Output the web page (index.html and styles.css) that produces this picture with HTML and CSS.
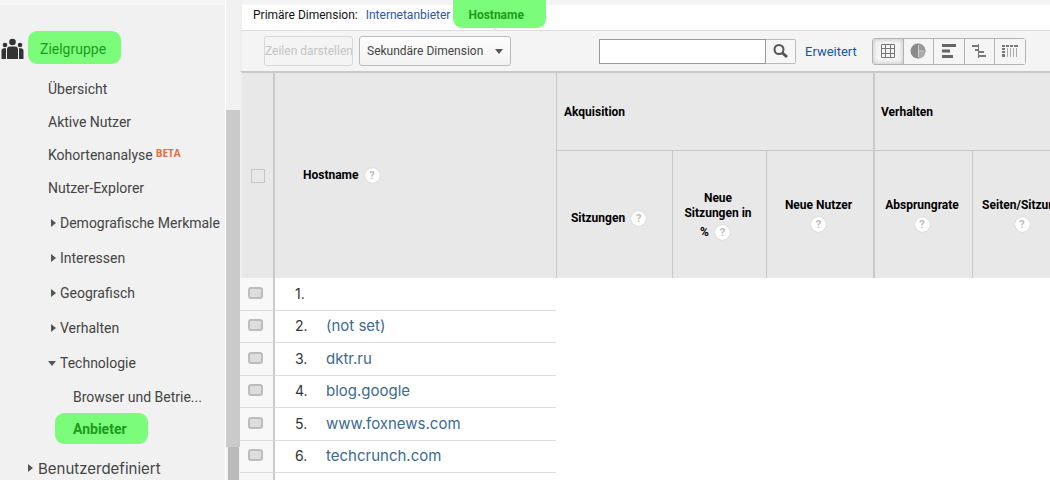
FILE: index.html
```html
<!DOCTYPE html>
<html lang="de">
<head>
<meta charset="utf-8">
<title>Zielgruppe – Anbieter</title>
<link rel="stylesheet" href="styles.css">
</head>
<body>
<div class="app">
  <nav class="sidebar" aria-label="Berichte">
    <div class="section">
      <svg class="people" width="23" height="22" viewBox="0 0 23 22" fill="#333" aria-hidden="true">
        <circle cx="11.500" cy="4" r="3.300"/><circle cx="4" cy="7" r="2.300"/><circle cx="19" cy="7" r="2.300"/>
        <path d="M6 21v-9.500q0-3 3-3h5q3 0 3 3v9.500zM.500 21v-8q0-2.700 2.700-2.700h1.800v10.700zM22.500 21v-8q0-2.700-2.700-2.700h-1.800v10.700z"/>
      </svg>
      <a class="pill section-pill" href="#">Zielgruppe</a>
    </div>
    <ul class="menu">
      <li><a href="#">Übersicht</a></li>
      <li><a href="#">Aktive Nutzer</a></li>
      <li class="short"><a href="#">Kohortenanalyse<span class="beta">BETA</span></a></li>
      <li class="tall"><a href="#">Nutzer-Explorer</a></li>
      <li class="tall"><a href="#"><i class="right"></i>Demografische Merkmale</a></li>
      <li class="tall"><a href="#"><i class="right"></i>Interessen</a></li>
      <li class="tall"><a href="#"><i class="right"></i>Geografisch</a></li>
      <li class="tall"><a href="#"><i class="right"></i>Verhalten</a></li>
      <li class="tall"><a href="#"><i class="down"></i>Technologie</a></li>
      <li class="short child"><a href="#">Browser und Betrie...</a></li>
      <li class="short"><a class="pill child-pill" href="#">Anbieter</a></li>
    </ul>
    <a class="custom" href="#"><i class="right"></i>Benutzerdefiniert</a>
  </nav>
  <div class="scroll" aria-hidden="true"><div class="track"></div><div class="thumb"></div><div class="thumb-end"></div></div>
  <main class="main">
    <div class="dimensions">
      <span>Primäre Dimension:</span>
      <a class="dim" href="#">Internetanbieter</a>
      <a class="pill dim-pill" href="#">Hostname</a>
    </div>
    <div class="toolbar">
      <button class="btn plot" disabled>Zeilen darstellen</button>
      <button class="btn secondary">Sekundäre Dimension<i class="down"></i></button>
      <form class="search">
        <input type="text" aria-label="Suche">
        <button type="button" aria-label="Suchen">
          <svg width="16" height="16" viewBox="0 0 16 16" fill="none" stroke="#555"><circle cx="6" cy="6.500" r="4.500" stroke-width="2"/><path d="M9.500 10l4.500 4" stroke-width="3"/></svg>
        </button>
      </form>
      <a class="advanced" href="#">Erweitert</a>
      <div class="views">
        <button class="active" aria-label="Tabelle"><svg width="16" height="16" viewBox="0 0 16 16" fill="none" stroke="#777"><path d="M1.500 1.500h13v13h-13zM1.500 5.500h13M1.500 10.500h13M5.500 1.500v13M10.500 1.500v13"/></svg></button>
        <button aria-label="Prozentsatz"><svg width="16" height="16" viewBox="0 0 16 16"><circle cx="8" cy="8" r="7.500" fill="#8a8a8a"/><path d="M8.500.500a7.500 7.500 0 0 1 7 7h-7z" fill="#999"/><path d="M8.500 8.500h7a7.500 7.500 0 0 1-7 7z" fill="#aaa"/><path d="M8.500 2v12M8.500 8h5.500" stroke="#d0d0d0" fill="none"/></svg></button>
        <button aria-label="Leistung"><svg width="16" height="16" viewBox="0 0 16 16" fill="#666"><path d="M1 1h14v3H1zM1 6.500h8v3H1zM1 12h11v3H1z"/></svg></button>
        <button aria-label="Vergleich"><svg width="16" height="16" viewBox="0 0 16 16" fill="#777"><path d="M1 2h7v2H1zM4 6h4v2H4zM8 8h5v2H8zM8 12h7v2H8zM7 1h1v14H7z"/></svg></button>
        <button aria-label="Pivot"><svg width="18" height="16" viewBox="0 0 18 16" fill="#777"><path d="M1 2h3v2H1zM5 2h3v2H5zM9 2h3v2H9zM13 2h4v2h-4zM1 5h3v2H1zM1 8h3v2H1zM1 11h3v3H1z"/><path d="M6 5h1v9H6zM9 5h1v9H9zM12 5h1v9h-1zM15 5h1v9h-1z" fill="#aaa"/></svg></button>
      </div>
    </div>
    <table class="report">
      <colgroup><col class="c-check"><col class="c-host"><col class="c-visits"><col class="c-new"><col class="c-users"><col class="c-bounce"><col class="c-pages"></colgroup>
      <thead>
        <tr class="groups">
          <th rowspan="2" class="h-check"><input type="checkbox" aria-label="Alle auswählen"></th>
          <th rowspan="2" class="h-host">Hostname<span class="help">?</span></th>
          <th colspan="3" class="group">Akquisition</th>
          <th colspan="2" class="group heavy">Verhalten</th>
        </tr>
        <tr class="metrics">
          <th class="visits">Sitzungen<span class="help">?</span></th>
          <th>Neue Sitzungen in <span class="unit">%<span class="help">?</span></span></th>
          <th>Neue Nutzer<span class="help below">?</span></th>
          <th class="heavy">Absprungrate<span class="help below">?</span></th>
          <th>Seiten/Sitzung<span class="help below">?</span></th>
        </tr>
      </thead>
      <tbody>
        <tr><td class="check"><input type="checkbox" aria-label="Zeile 1"></td><td class="host"><span class="num">1.</span></td></tr>
        <tr><td class="check"><input type="checkbox" aria-label="Zeile 2"></td><td class="host"><span class="num">2.</span><a href="#">(not set)</a></td></tr>
        <tr><td class="check"><input type="checkbox" aria-label="Zeile 3"></td><td class="host"><span class="num">3.</span><a href="#">dktr.ru</a></td></tr>
        <tr><td class="check"><input type="checkbox" aria-label="Zeile 4"></td><td class="host"><span class="num">4.</span><a href="#">blog.google</a></td></tr>
        <tr><td class="check"><input type="checkbox" aria-label="Zeile 5"></td><td class="host"><span class="num">5.</span><a href="#">www.foxnews.com</a></td></tr>
        <tr><td class="check"><input type="checkbox" aria-label="Zeile 6"></td><td class="host"><span class="num">6.</span><a href="#">techcrunch.com</a></td></tr>
        <tr><td class="check"></td><td class="host"></td></tr>
      </tbody>
    </table>
  </main>
</div>
</body>
</html>
```
FILE: styles.css
```css
* { box-sizing: border-box; }
body { margin: 0; overflow: hidden; font-family: Roboto, "Liberation Sans", sans-serif; font-size: 12px; color: #222; background: #fff; }
a { text-decoration: none; color: inherit; }
button, input { font: inherit; margin: 0; }
.app { display: flex; height: 100vh; }

.sidebar { flex: 0 0 226px; padding-top: 26px; background: linear-gradient(#f5f5f5 5px, #f1f1f1 5px); border-right: 1px solid #fff; color: #444; font-size: 14px; white-space: nowrap; }
.section { display: flex; align-items: center; gap: 4px; padding: 5px 0 8px 1px; }
.pill { display: flex; align-items: center; background: #7bfd7b; color: #1c9a1c; border-radius: 9px; }
.section-pill { width: 93px; height: 33px; padding: 3px 0 0 12px; }
.people { margin-top: 3px; }
.menu { list-style: none; margin: 0; padding: 0; }
.menu li { height: 33px; padding: 1px 0 0 48px; display: flex; align-items: center; }
.menu .short { height: 32px; }
.menu .tall { height: 35px; }
.menu .child { padding-left: 73px; }
.menu a { display: flex; align-items: center; }
.menu .child-pill { width: 93px; height: 31px; margin-left: 7px; padding-left: 18px; font-weight: bold; }
.beta { align-self: flex-start; margin-left: 3px; font-family: "Open Sans", sans-serif; font-size: 10px; line-height: 12px; font-weight: bold; color: #e0703c; }
.right { border: solid transparent; border-width: 4px 0 4px 5px; border-left-color: #555; margin: 0 4px 0 3px; }
.down { border: solid transparent; border-width: 5px 4px 0; border-top-color: #555; margin: 0 4px 0 0; }
.custom { display: flex; align-items: center; height: 32px; margin-top: 8px; padding-left: 25px; font-family: Inter, sans-serif; font-size: 15px; }
.custom .right { margin-right: 5px; }

.scroll { flex: 0 0 14px; display: flex; flex-direction: column; background: #f1f1f1; }
.track { flex: 0 0 110px; }
.thumb { flex: 1 1 auto; background: #cacaca; }
.thumb-end { flex: 0 0 33px; margin: 0 1px 0 2px; background: #bababa; }

.main { flex: 1 1 0; min-width: 0; overflow: hidden; }
.dimensions { display: flex; align-items: center; height: 31px; padding-left: 11px; background: linear-gradient(#f4f4f4 5px, #fff 5px); border-left: 2px solid #efefef; border-bottom: 1px solid #ddd; color: #111; white-space: nowrap; }
.dim { margin: 0 3px 0 8px; color: #2a56a5; }
.dim-pill { position: relative; width: 93px; height: 28px; margin-bottom: 2px; padding: 2px 0 0 15px; border-radius: 0 0 9px 9px; font-weight: bold; }
.dim-pill::after { content: ""; position: absolute; left: 38px; top: 28px; border: solid transparent; border-width: 0 4px 3px; border-bottom-color: #e4e4e4; }
.toolbar { display: flex; align-items: center; height: 40px; padding-left: 22px; background: #f4f4f4; border-left: 2px solid #efefef; white-space: nowrap; }
.btn { height: 30px; padding: 0; border: 1px solid #bbb; border-radius: 3px; background: linear-gradient(#fdfdfd, #f3f3f3); color: #444; }
.plot { width: 89px; border-color: #d8d8d8; background: #f4f4f4; color: #c4c4c4; overflow: hidden; }
.secondary { display: flex; align-items: center; justify-content: space-between; width: 152px; margin-left: 6px; padding: 0 7px; }
.secondary .down { margin: 0; }
.search { display: flex; margin-left: 88px; }
.search input { width: 167px; height: 25px; border: 1px solid #999; background: #fff; padding: 0 4px; }
.search button { display: flex; align-items: center; justify-content: center; width: 30px; height: 25px; padding: 0; border: 1px solid #bbb; border-left: 0; border-radius: 0 2px 2px 0; background: #f7f7f7; }
.advanced { margin-left: 9px; color: #15569f; font-size: 13px; }
.views { display: flex; margin-left: 15px; border: 1px solid #b3b3b3; border-radius: 3px; }
.views button { display: flex; align-items: center; justify-content: center; width: 31px; height: 25px; padding: 0; border: 0; border-right: 1px solid #b3b3b3; background: #f5f5f5; }
.views button:nth-child(even) { width: 30px; }
.views button:last-child { width: 30px; border-right: 0; }
.views .active { box-shadow: inset 0 0 5px #bbb; }

.report { width: 834px; table-layout: fixed; border-spacing: 0; }
.c-check { width: 33px; }
.c-host { width: 283px; }
.c-visits { width: 116px; }
.c-new { width: 94px; }
.c-users { width: 107px; }
.c-bounce { width: 99px; }
.c-pages { width: 102px; }
th { padding: 0; background: #e8e8e8; color: #000; line-height: 15px; border-left: 1px solid #c8c8c8; }
.groups th { border-top: 2px solid #c9c9c9; }
.groups { height: 79px; }
.metrics { height: 128px; }
.metrics th { border-top: 1px solid #c8c8c8; padding: 1px 9px 0 6px; }
.metrics .visits { padding: 8px 12px 0 0; }
.report .group { text-align: left; padding: 2px 0 0 7px; }
.report .h-check { border-left: 2px solid #efefef; }
.report .h-host { border-left: 2px solid #c9c9c9; text-align: left; padding-left: 28px; }
.report .heavy { border-left: 2px solid #c9c9c9; }
.report .group.heavy { padding-left: 6px; }
input[type="checkbox"] { appearance: none; display: block; margin: 0 auto; width: 14px; height: 14px; border: 1px solid #c6c6c6; background: #e8e8e8; }
.help { display: inline-block; width: 15px; height: 15px; margin-left: 6px; border-radius: 50%; background: #fff; box-shadow: 0 0 1px #aaa; color: #bbb; font-size: 11px; line-height: 15px; text-align: center; }
.help.below { display: block; margin: 4px auto 0; }
.unit { display: flex; align-items: center; justify-content: center; padding: 4px 6px 0 0; }
td { padding: 0; height: 32px; border-bottom: 1px solid #dcdcdc; font-family: Inter, sans-serif; font-size: 15px; line-height: 18px; }
tbody tr:nth-child(odd) td { height: 33px; }
.check { background: #f8f8f8; }
.report .check { padding: 0 2px 3px 0; }
.report .check input { width: 15px; height: 12px; border: 2px solid #bcbcbc; border-radius: 3px; background: #ddd; }
.host { padding: 0 0 1px 20px; border-left: 2px solid #ccc; white-space: nowrap; }
.num { display: inline-block; width: 31px; color: #333; font-size: 14px; }
.host a { color: #3c6a90; }
```
